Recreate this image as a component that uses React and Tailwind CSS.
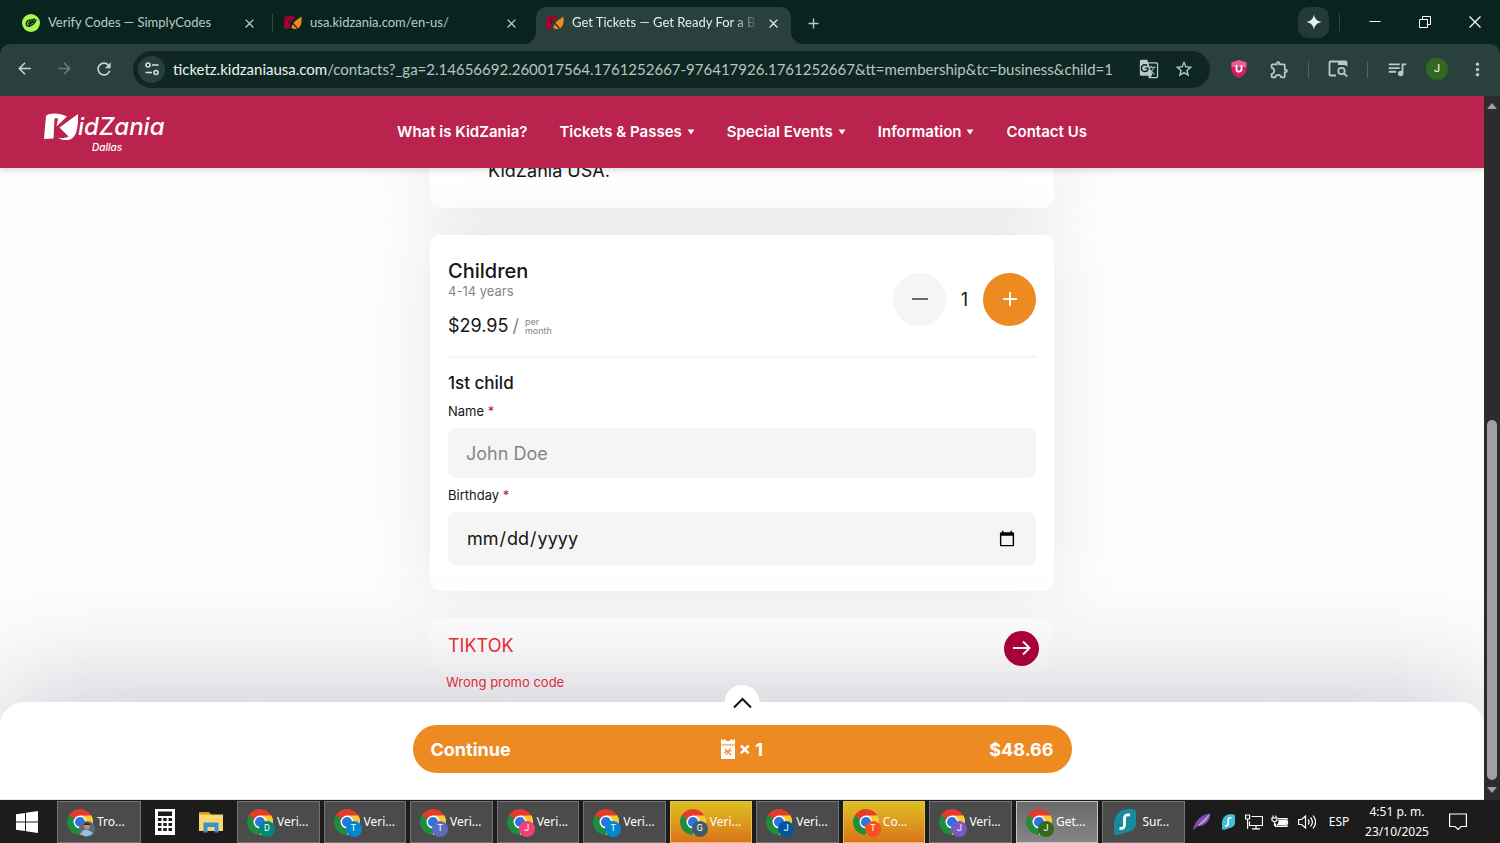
import React, { useState } from 'react';
import {
  MdArrowBack,
  MdArrowForward,
  MdRefresh,
  MdStarBorder,
  MdOutlineExtension,
  MdGTranslate,
  MdMoreVert,
  MdQueueMusic,
  MdClose,
  MdAdd
} from 'react-icons/md';

const tabs = [
  { title: "Verify Codes — SimplyCodes", icon: "simply", divider: true },
  { title: "usa.kidzania.com/en-us/", icon: "kidzania" },
  { title: "Get Tickets — Get Ready For a B", icon: "kidzania", active: true }
];

const navItems = [
  { label: "What is KidZania?" },
  { label: "Tickets & Passes", menu: true },
  { label: "Special Events", menu: true },
  { label: "Information", menu: true },
  { label: "Contact Us" }
];

const tasks = [
  { label: "Veri...", letter: "D", badge: "bg-[#00897b]" },
  { label: "Veri...", letter: "T", badge: "bg-[#0288d1]" },
  { label: "Veri...", letter: "T", badge: "bg-[#5c6bc0]" },
  { label: "Veri...", letter: "J", badge: "bg-[#ec407a]" },
  { label: "Veri...", letter: "T", badge: "bg-[#0288d1]" },
  { label: "Veri...", letter: "G", badge: "bg-[#455a64]", state: "alert" },
  { label: "Veri...", letter: "J", badge: "bg-[#01579b]" },
  { label: "Co...", letter: "T", badge: "bg-[#f4511e]", state: "alert" },
  { label: "Veri...", letter: "J", badge: "bg-[#7e57c2]" },
  { label: "Get...", letter: "J", badge: "bg-[#33691e]", state: "active" }
];

const SimplyIcon = () => (
  <svg viewBox="0 0 18 18" className="size-[18px] shrink-0">
    <circle cx="9" cy="9" r="9" fill="#a6f750" />
    <path d="M12.5 5.2 6.8 6.4C3.6 7.4 3.4 12 6.6 12.2c2.6.1 6-2.6 7.4-6.2M6.4 9.8c1.400-2.400 3.600-2.200 5-1.400M7.600 10.800l4-4" fill="none" stroke="#10261f" strokeWidth="1.500" strokeLinecap="round" />
  </svg>
);

const KidzaniaIcon = () => (
  <svg viewBox="0 0 18 18" className="size-[18px] shrink-0">
    <path d="M.500 3C4 1.500 8 2 11.500 3L6.500 9 6 14.500 0 14.800Z" fill="#a50034" />
    <path d="M17.400 2.500c.6 5.400 0 9.400-3.400 11.900-2.400 1.200-4.800.8-6.800-.6l2-4.800C10 8 13.600 5 17.400 2.500Z" fill="#ef8b1e" />
    <path d="M8.500 9 13.500 14.500M5.500 5.500 5 10" stroke="#1c2b28" strokeWidth="1.200" />
  </svg>
);

const BrowserTab = ({ tab }) => (
  <div
    className={
      tab.active
        ? "relative mr-[7px] flex h-[37px] w-[255px] items-center rounded-t-[10px] bg-[#29403c] px-[10px] pb-[5px] text-[#e6efec] before:absolute before:bottom-0 before:-left-3 before:size-3 before:bg-[radial-gradient(circle_at_0_0,transparent_12px,#29403c_12px)] after:absolute after:bottom-0 after:-right-3 after:size-3 after:bg-[radial-gradient(circle_at_100%_0,transparent_12px,#29403c_12px)]"
        : "relative mr-[7px] flex h-[37px] w-[255px] items-center px-[10px] pb-[5px] text-[#b9ccc7]"
    }
  >
    {tab.icon === "simply" ? <SimplyIcon /> : <KidzaniaIcon />}
    <span
      className={
        tab.active
          ? "ml-2 w-[184px] overflow-hidden whitespace-nowrap [mask-image:linear-gradient(to_right,black_160px,transparent_188px)]"
          : "ml-2 w-[184px] overflow-hidden whitespace-nowrap"
      }
    >
      {tab.title}
    </span>
    <button aria-label="Close tab" className="ml-auto flex size-4 items-center justify-center">
      <MdClose size={15} />
    </button>
    {tab.divider && <span className="absolute -right-[6px] h-[18px] w-px bg-[#2f4a45]" />}
  </div>
);

const TabStrip = () => (
  <div className="flex h-[44px] items-end bg-[#09231f] pl-3 font-['Lato','Noto_Sans',sans-serif] text-[13px]">
    {tabs.map((tab, idx) => (
      <BrowserTab key={idx} tab={tab} />
    ))}
    <button aria-label="New tab" className="flex h-[37px] w-[30px] items-center justify-center pb-[5px] text-[#b9ccc7]">
      <MdAdd size={17} />
    </button>
    <div className="ml-auto flex h-full items-center text-white">
      <button aria-label="Gemini" className="flex size-[31px] items-center justify-center rounded-[10px] bg-[#243a36]">
        <svg viewBox="0 0 16 16" className="size-4">
          <path d="M8 .5C8.900 5 11 7.100 15.500 8 11 8.900 8.900 11 8 15.500 7.100 11 5 8.900.5 8 5 7.100 7.100 5 8 .5Z" fill="#e6f2ee" />
        </svg>
      </button>
      <span className="mx-[10px] h-[18px] w-px bg-[#2f4a45]" />
      <button aria-label="Minimize" className="flex w-[50px] justify-center">
        <svg viewBox="0 0 12 12" className="size-3"><path d="M.5 5.500h11" stroke="currentColor" /></svg>
      </button>
      <button aria-label="Restore" className="flex w-[50px] justify-center">
        <svg viewBox="0 0 12 12" className="size-3" fill="none" stroke="currentColor">
          <path d="M.5 3.500h8v8h-8zM3.500 3.500v-3h8v8h-3" />
        </svg>
      </button>
      <button aria-label="Close" className="flex w-[50px] justify-center">
        <svg viewBox="0 0 12 12" className="size-3"><path d="M.5.500l11 11M11.500.500l-11 11" stroke="currentColor" strokeWidth="1.200" /></svg>
      </button>
    </div>
  </div>
);

const Toolbar = () => (
  <div className="bg-[#09231f]">
    <div className="flex h-[52px] items-center gap-[9px] rounded-t-[10px] bg-[#29403c] pb-[2px] pl-1 pr-[3px] text-[#b5cbc5]">
      <div className="flex">
        <button aria-label="Back" className="flex w-10 justify-center text-[#c3d6d1]"><MdArrowBack size={19} /></button>
        <button aria-label="Forward" className="flex w-10 justify-center text-[#66807a]"><MdArrowForward size={19} /></button>
        <button aria-label="Reload" className="flex w-10 justify-center text-[#c3d6d1]"><MdRefresh size={20} /></button>
      </div>
      <div className="flex h-[37px] min-w-0 flex-1 items-center rounded-full bg-[#0f2723] pl-[5px] pr-4">
        <button aria-label="Site information" className="flex size-[27px] shrink-0 items-center justify-center rounded-full bg-[#29403c]">
          <svg viewBox="0 0 16 16" className="size-4" fill="none" stroke="#d4e2de" strokeWidth="1.600">
            <circle cx="4" cy="4" r="2" />
            <path d="M8 4h6.500M1.500 11.500h6.500" />
            <circle cx="12" cy="11.500" r="2" />
          </svg>
        </button>
        <div className="ml-2 min-w-0 flex-1 overflow-hidden whitespace-nowrap font-['Lato','Noto_Sans',sans-serif] text-[15px] text-[#b5c6c2]">
          <span className="text-[#eaf3f0]">ticketz.kidzaniausa.com</span>/contacts?_ga=2.14656692.260017564.1761252667-976417926.1761252667&amp;tt=membership&amp;tc=business&amp;child=1
        </div>
        <button aria-label="Translate" className="mr-[15px] shrink-0"><MdGTranslate size={20} /></button>
        <button aria-label="Bookmark" className="shrink-0"><MdStarBorder size={20} /></button>
      </div>
      <div className="flex items-center">
        <button aria-label="Shield" className="flex w-10 justify-center">
          <svg viewBox="0 0 16 18" className="h-[18px] w-4">
            <path d="M8 0 15.500 2.500V9c0 4-3 7-7.500 9C3.500 16 .5 13 .5 9V2.500Z" fill="#d81e63" />
            <path d="M8 0 15.500 2.500V7H.500V2.500Z" fill="#ee5d91" />
            <path d="M5.500 5v4.200a2.500 2.500 0 0 0 5 0V5" fill="none" stroke="#fff" strokeWidth="1.800" />
          </svg>
        </button>
        <button aria-label="Extensions" className="flex w-10 justify-center">
          <MdOutlineExtension size={21} />
        </button>
        <span className="mx-[9px] h-[17px] w-px bg-[#4d645f]" />
        <button aria-label="Search tabs" className="flex w-10 justify-center">
          <svg viewBox="0 0 20 18" className="h-[18px] w-5" fill="none" stroke="currentColor" strokeWidth="1.800">
            <path d="M8 15.500H2.500a1 1 0 0 1-1-1v-12a1 1 0 0 1 1-1h15a1 1 0 0 1 1 1V6" />
            <path d="M10 3h8.500" strokeWidth="4" />
            <circle cx="13.500" cy="11" r="3.200" />
            <path d="m16 13.500 3.200 3.200" />
          </svg>
        </button>
        <span className="mx-[9px] h-[17px] w-px bg-[#4d645f]" />
        <button aria-label="Media" className="flex w-10 justify-center"><MdQueueMusic size={22} /></button>
        <button aria-label="Profile" className="flex w-10 justify-center">
          <span className="flex size-[22px] items-center justify-center rounded-full bg-[#33691e] font-['Roboto',sans-serif] text-[11px] text-white">J</span>
        </button>
        <button aria-label="Menu" className="flex w-10 justify-center"><MdMoreVert size={21} /></button>
      </div>
    </div>
  </div>
);

const SiteHeader = () => (
  <header className="relative z-10 flex h-[72px] shrink-0 items-center justify-center bg-[#ba234d] text-white shadow-[0_2px_6px_rgba(0,0,0,0.15)]">
    <a href="#home" aria-label="KidZania Dallas" className="absolute left-11 top-[17px] flex flex-col">
      <span className="flex h-[28px] items-center">
        <svg viewBox="0 0 34 28" className="h-[28px] w-[34px] shrink-0" fill="currentColor">
          <path d="M2 3C6-.5 16 0 23 3.500L12.500 13.500 14 5.500C12.500 5 11.500 5 10.500 5.500L9.500 25.500 0 26Z" />
          <path d="M34 1C34.500 12 33 22 28 25.500 24 28 18 27.500 13.500 24.500 18 25.500 22 25 24.500 23.500L15.500 14.500Z" />
        </svg>
        <span className="text-[24px] font-medium italic leading-7">idZania</span>
      </span>
      <span className="ml-12 text-[10px] font-medium italic leading-3">Dallas</span>
    </a>
    <nav className="flex gap-8 text-[15px] font-semibold">
      {navItems.map((item) => (
        <a key={item.label} href="#menu" className="flex items-center gap-[5px]">
          {item.label}
          {item.menu && (
            <svg viewBox="0 0 8 6" className="h-[6px] w-2" fill="currentColor"><path d="M.5.500h7L4 5.500Z" /></svg>
          )}
        </a>
      ))}
    </nav>
  </header>
);

const ChildrenCard = () => {
  const [count, setCount] = useState(1);

  return (
    <div className="mt-[27px] rounded-[10px] bg-white px-[18px] pt-6 pb-[26px] shadow-[0_0_70px_rgba(40,40,70,0.1)]">
      <div className="flex items-center justify-between border-b-2 border-[#f5f5f5] pb-[17px]">
        <div>
          <h2 className="text-[20px] font-medium leading-6">Children</h2>
          <p className="text-[13px] leading-4 text-[#858585]">4-14 years</p>
          <div className="mt-[14px] flex items-center leading-[26px]">
            <span className="text-[18px]">$29.95</span>
            <span className="ml-1 text-[18px] text-[#858585]">/</span>
            <span className="ml-[6px] text-[9px] leading-[9px] text-[#858585]">per<br />month</span>
          </div>
        </div>
        <div className="flex items-center">
          <button
            aria-label="Remove child"
            onClick={() => setCount(Math.max(0, count - 1))}
            className="flex size-[53px] items-center justify-center rounded-full bg-[#f5f5f5]"
          >
            <span className="h-[2px] w-4 bg-[#6a6a6a]" />
          </button>
          <span className="w-[37px] text-center text-[18px]">{count}</span>
          <button
            aria-label="Add child"
            onClick={() => setCount(count + 1)}
            className="flex size-[53px] items-center justify-center rounded-full bg-[#ee8a22]"
          >
            <svg viewBox="0 0 14 14" className="size-[14px]"><path d="M7 0v14M0 7h14" stroke="#fff" strokeWidth="1.800" /></svg>
          </button>
        </div>
      </div>

      <h3 className="mt-[13px] text-[17px] font-medium leading-6">1st child</h3>
      <label htmlFor="name" className="mt-2 block text-[13px] leading-4">
        Name <span className="text-[#b4123e]">*</span>
      </label>
      <input
        id="name"
        placeholder="John Doe"
        className="mt-[9px] block h-[50px] w-full rounded-lg bg-[#f5f5f5] px-[18px] text-[18px] placeholder:text-[#858585]"
      />
      <label htmlFor="birthday" className="mt-[9px] block text-[13px] leading-4">
        Birthday <span className="text-[#b4123e]">*</span>
      </label>
      <input
        id="birthday"
        type="date"
        className="mt-[9px] block h-[53px] w-full rounded-lg bg-[#f5f5f5] px-[18px] text-[18px]"
      />
    </div>
  );
};

const PromoCode = () => (
  <div>
    <div className="mt-[27px] flex h-[54px] items-center rounded-[10px] bg-white pl-[18px] pr-[15px]">
      <input
        aria-label="Promo code"
        defaultValue="TIKTOK"
        className="min-w-0 flex-1 text-[18px] text-[#ee3036] outline-none"
      />
      <button aria-label="Apply" className="mt-[6px] flex size-[35px] items-center justify-center rounded-full bg-[#b0003a]">
        <svg viewBox="0 0 18 16" className="h-4 w-[18px]" fill="none" stroke="#fff" strokeWidth="2">
          <path d="M0 8h16.500M10 1.500 16.500 8 10 14.500" />
        </svg>
      </button>
    </div>
    <p className="ml-4 mt-[2px] text-[13px] leading-4 text-[#ee3036]">Wrong promo code</p>
  </div>
);

const ContinueBar = () => (
  <div className="absolute inset-x-0 bottom-0 rounded-t-[24px] border-b border-[#e6e6e6] bg-white pt-[23px] pb-[26px] shadow-[0_0_120px_rgba(40,30,70,0.3)]">
    <button aria-label="Show order" className="absolute -top-[17px] left-1/2 flex size-[35px] -translate-x-1/2 items-center justify-center rounded-full bg-white">
      <svg viewBox="0 0 20 12" className="h-3 w-5" fill="none" stroke="#111" strokeWidth="2">
        <path d="M1.500 10.500 10 2l8.500 8.500" />
      </svg>
    </button>
    <button className="mx-auto grid h-12 w-full max-w-[659px] grid-cols-3 items-center rounded-full bg-[#ee8a22] px-[18px] text-[18px] font-bold text-white">
      <span className="text-left">Continue</span>
      <span className="flex items-center justify-center gap-1">
        <svg viewBox="0 0 14 20" className="h-5 w-[14px]">
          <path d="M0 0 2 1.200 4 0 5 2h4l1-2 2 1.200L14 0v5H0ZM0 6.500h14V20H0Z" fill="#fff" />
          <path d="M0 5.800h14" stroke="#fff" strokeDasharray="1.500 1" />
          <path d="m4 10 6 6M9.500 9 5 16M3.500 14l3-2.500M8 12h3" stroke="#ee8a22" strokeWidth="1.200" />
        </svg>
        × 1
      </span>
      <span className="text-right">$48.66</span>
    </button>
  </div>
);

const ScrollBar = () => (
  <div className="flex w-4 shrink-0 flex-col items-center bg-[#2c2c2c] py-[7px]">
    <svg viewBox="0 0 10 6" className="h-[6px] w-[10px]" fill="#a0a0a0"><path d="M0 6 5 0l5 6Z" /></svg>
    <div className="grow-[311]" />
    <div className="w-[10px] grow-[360] rounded-full bg-[#a0a0a0]" />
    <svg viewBox="0 0 10 6" className="mt-[7px] h-[6px] w-[10px]" fill="#a0a0a0"><path d="M0 0 5 6l5-6Z" /></svg>
  </div>
);

const ChromeLogo = () => (
  <svg viewBox="0 0 26 26" className="size-[26px]">
    <path d="M13 13 1.750 6.500A13 13 0 0 1 24.250 6.500Z" fill="#e33b2e" />
    <path d="M13 13 24.250 6.500A13 13 0 0 1 13 26Z" fill="#fcc934" />
    <path d="M13 13V26A13 13 0 0 1 1.750 6.500Z" fill="#1e8e3e" />
    <path d="M13 6.500h11.250A13 13 0 0 1 13 26l5.700-9.700Z" fill="#fcc934" />
    <circle cx="13" cy="13" r="6.500" fill="#fff" />
    <circle cx="13" cy="13" r="5" fill="#2f73e0" />
  </svg>
);

const TaskButton = ({ task }) => (
  <button
    className={
      task.state === "alert"
        ? "flex h-[42px] min-w-0 flex-1 items-center border border-[#e3c254] bg-linear-to-b from-[#dcc01f] to-[#d9731c] pl-[9px]"
        : task.state === "active"
          ? "flex h-[42px] min-w-0 flex-1 items-center border border-[#c4c4c4] bg-linear-to-b from-[#6a6a6a] to-[#858585] pl-[9px]"
          : "flex h-[42px] min-w-0 flex-1 items-center border border-[#747474] bg-[#4b4b4b] pl-[9px]"
    }
  >
    <span className="relative shrink-0">
      <ChromeLogo />
      <span className={`absolute -right-[2px] -bottom-[2px] flex size-4 items-center justify-center rounded-full font-['Roboto',sans-serif] text-[9px] text-white ${task.badge}`}>
        {task.letter}
      </span>
    </span>
    <span className="ml-1">{task.label}</span>
  </button>
);

const Taskbar = () => (
  <div className="flex h-[43px] items-center bg-[#1c1c1c] font-['Noto_Sans','Open_Sans',sans-serif] text-[12px] text-white">
    <button aria-label="Start" className="flex w-[57px] justify-center pr-1">
      <svg viewBox="0 0 22 22" className="size-[22px]" fill="#fff">
        <path d="M0 3.200 9 2v8.500H0ZM10 1.800 22 0v10.500H10ZM0 11.500h9V20l-9-1.200ZM10 11.500h12V22l-12-1.800Z" />
      </svg>
    </button>
    <button className="flex h-[42px] w-[84px] items-center border border-[#747474] bg-[#4b4b4b] pl-[9px]">
      <span className="relative shrink-0">
        <ChromeLogo />
        <svg viewBox="0 0 16 16" className="absolute -right-[2px] -bottom-[2px] size-4">
          <circle cx="8" cy="8" r="8" fill="#5d6d78" />
          <path d="M2 13C3 9 6 8 9 9l5 3a8 8 0 0 1-12 1Z" fill="#8fc3e6" />
          <circle cx="8" cy="5.500" r="3" fill="#b98f7c" />
          <path d="M4.500 4C5 1 11 1 11.500 4Z" fill="#332a29" />
        </svg>
      </span>
      <span className="ml-1">Tro...</span>
    </button>
    <button aria-label="Calculator" className="flex w-12 justify-center">
      <svg viewBox="0 0 20 26" className="h-[26px] w-5">
        <path d="M0 0h20v26H0Z" fill="#fff" />
        <path d="M3 2.500h14v4.500H3Z" fill="#1c1c1c" />
        <path d="M3 10.500h14M3 15.500h14M3 20.500h14" stroke="#1c1c1c" strokeWidth="3" strokeDasharray="3.500 1.750" />
      </svg>
    </button>
    <button aria-label="File Explorer" className="mr-1 flex w-11 justify-center">
      <svg viewBox="0 0 26 22" className="h-[22px] w-[26px]">
        <path d="M1 1h10l2 2.500V6H1Z" fill="#d99a1c" />
        <path d="M1 3.500h24V20H1Z" fill="#f9d66b" />
        <path d="M1 6h24" stroke="#fbe291" />
        <path d="M5.500 11.500h15V21.500h-4V16h-7v5.500h-4Z" fill="#3d91d1" />
      </svg>
    </button>
    <div className="flex min-w-0 flex-1 gap-1">
      {tasks.map((task, idx) => (
        <TaskButton key={idx} task={task} />
      ))}
      <button className="flex h-[42px] min-w-0 flex-1 items-center border border-[#747474] bg-[#4b4b4b] pl-[9px]">
        <span className="flex w-[26px] shrink-0 justify-center">
          <svg viewBox="0 0 22 26" className="h-[26px] w-[22px]">
            <path d="M13 0h5c3 0 4 1.500 4 4v10c0 4-1.500 6-5 8L4 26c-2.500.6-4-.4-4-3V14C.5 6 6 .5 13 0Z" fill="#178a9e" />
            <path d="M16 6c-4-.6-5.500.6-5.500 3.500v6.500c0 2.500-1.500 3.700-5 3.500" fill="none" stroke="#fff" strokeWidth="2.800" />
          </svg>
        </span>
        <span className="ml-1">Sur...</span>
      </button>
    </div>
    <div className="flex w-[315px] shrink-0 items-center pl-1">
      <span className="flex w-[26px] justify-center">
        <svg viewBox="0 0 18 18" className="size-[18px]">
          <path d="M0 17.500C1 9 7 2 17 .5 18 7 13 13 4 13.500Z" fill="#7c4bb0" />
          <path d="M2 15 17 .5C14 8 9 12 3 13.500Z" fill="#c79be6" />
        </svg>
      </span>
      <span className="flex w-[26px] justify-center">
        <svg viewBox="0 0 22 26" className="h-4 w-[13px]">
          <path d="M13 0h5c3 0 4 1.500 4 4v10c0 4-1.500 6-5 8L4 26c-2.500.6-4-.4-4-3V14C.5 6 6 .5 13 0Z" fill="#43bfd6" />
          <path d="M16 6c-4-.6-5.500.6-5.500 3.500v6.500c0 2.500-1.500 3.700-5 3.500" fill="none" stroke="#fff" strokeWidth="2.800" />
        </svg>
      </span>
      <span className="flex w-[26px] justify-center">
        <svg viewBox="0 0 18 16" className="h-4 w-[18px]" fill="none" stroke="#fff" strokeWidth="1.200">
          <path d="M6.500 2.500h11v9H4.500V7.500M11 11.500v3M7 14.800h8" />
          <path d="M.600 1h4v4h-4zM2.600 5v10" />
        </svg>
      </span>
      <span className="flex w-[26px] justify-center">
        <svg viewBox="0 0 18 14" className="h-[14px] w-[18px]" fill="none" stroke="#fff" strokeWidth="1.200">
          <path d="M7 3.500h9v8H4.500v-3" />
          <path d="M8 5h7v5H6.500L8 8Z" fill="#fff" />
          <path d="M16.500 6v3M2 .5V3M5 .5V3M1 3h5v2.500L3.500 7 1 5.500ZM3.500 7v4" />
        </svg>
      </span>
      <span className="flex w-[27px] justify-center">
        <svg viewBox="0 0 18 16" className="h-4 w-[18px]" fill="none" stroke="#fff" strokeWidth="1.200">
          <path d="M.600 5.500h3L7.500 2v12l-3.900-3.500h-3ZM10 5.500c1.300 1.500 1.300 3.500 0 5M12.500 3.500c2.300 2.700 2.300 6.300 0 9M15 1.500c3.200 4 3.200 9 0 13" />
        </svg>
      </span>
      <span className="w-[38px] text-center">ESP</span>
      <span className="w-[78px] text-center leading-5">4:51 p. m.<br />23/10/2025</span>
      <button aria-label="Notifications" className="ml-[13px]">
        <svg viewBox="0 0 18 18" className="size-[18px]" fill="none" stroke="#fff" strokeWidth="1.200">
          <path d="M.600 1h16.800v12.500H12L9 16.500 6 13.500H.600Z" />
        </svg>
      </button>
    </div>
  </div>
);

const App = () => (
  <div className="flex h-screen flex-col overflow-hidden font-['Inter',sans-serif] text-[#161616]">
    <TabStrip />
    <Toolbar />
    <div className="flex min-h-0 flex-1">
      <div className="relative flex min-w-0 flex-1 flex-col overflow-hidden bg-[#fdfdfd]">
        <SiteHeader />
        <main className="mx-auto -mt-8 w-full max-w-[624px]">
          <div className="rounded-[10px] bg-white pt-[22px] pb-6 pl-[58px] shadow-[0_0_70px_rgba(40,40,70,0.1)]">
            <p className="text-[18px] leading-[26px]">KidZania USA.</p>
          </div>
          <ChildrenCard />
          <PromoCode />
        </main>
        <ContinueBar />
      </div>
      <ScrollBar />
    </div>
    <Taskbar />
  </div>
);

export default App;
